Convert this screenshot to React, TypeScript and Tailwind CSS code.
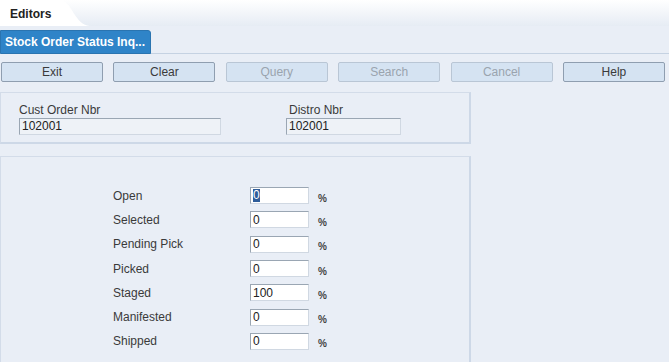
import React from "react";

const font = { fontFamily: '"Liberation Sans", Arial, sans-serif' };

function Btn({ label, disabled }: { label: string; disabled?: boolean }) {
  return (
    <div
      className={`w-[102px] h-[20px] flex items-center justify-center rounded-[2px] border text-[12px] bg-[#d5e3f2] ${
        disabled ? "border-[#b9c6d5] text-[#9aa4ae]" : "border-[#8f9eb0] text-[#3a3a3a]"
      }`}
    >
      {label}
    </div>
  );
}

function Row({ label, value, sel }: { label: string; value: string; sel?: boolean }) {
  return (
    <div className="flex items-center h-[24.3px]">
      <div className="w-[137px] text-[12px] text-[#3a3a3a] pl-[112px] box-content">{label}</div>
      <div className="w-[59px] h-[17px] bg-white border border-[#9aa6b3] border-r-[#d0d8e2] border-b-[#d0d8e2] flex items-center pl-[2px] text-[12px] text-[#222]">
        {sel ? <span className="bg-[#2f5d9a] text-white leading-[13px]">{value}</span> : value}
      </div>
      <div className="ml-[9px] mt-[5px] text-[10px] font-bold text-[#444]">%</div>
    </div>
  );
}

export default function App() {
  return (
    <div className="w-[669px] h-[362px] overflow-hidden bg-[#e9eef6] relative" style={font}>
      {/* top strip */}
      <div className="h-[26px] bg-gradient-to-b from-[#ffffff] to-[#e6ecf4] relative">
        <svg className="absolute left-0 top-0" width="92" height="26" viewBox="0 0 92 26">
          <path d="M0 0 H60 C72 0 74 25 90 26 H0 Z" fill="#ffffff" />
        </svg>
        <div className="absolute left-[10px] top-[5px] text-[12px] font-bold text-[#222]">Editors</div>
      </div>
      {/* tab row */}
      <div className="h-[28px] border-b border-[#c5d2e2] flex items-end pl-0">
        <div className="h-[24px] w-[151px] bg-[#2f84c8] rounded-tr-[3px] border border-[#2a74b0] flex items-center pl-[4px] text-white text-[12px] font-bold mb-[-1px]">
          Stock Order Status Inq...
        </div>
      </div>
      {/* buttons */}
      <div className="flex gap-[10.4px] pl-[1px] mt-[8px]">
        <Btn label="Exit" />
        <Btn label="Clear" />
        <Btn label="Query" disabled />
        <Btn label="Search" disabled />
        <Btn label="Cancel" disabled />
        <Btn label="Help" />
      </div>
      {/* panel 1 */}
      <div className="mt-[10px] w-[471px] h-[52px] border border-[#d3dce9] border-r-[2px] border-b-[2px] border-r-[#cdd8e7] border-b-[#cdd8e7] flex pt-[10px]">
        <div className="pl-[18px] w-[285px]">
          <div className="text-[12px] text-[#3a3a3a] leading-[14px]">Cust Order Nbr</div>
          <div className="mt-[1px] w-[202px] h-[17px] bg-[#eef2f7] border border-[#9aa6b3] border-r-[#d0d8e2] border-b-[#d0d8e2] text-[12px] text-[#222] pl-[2px] leading-[15px]">
            102001
          </div>
        </div>
        <div>
          <div className="text-[12px] text-[#3a3a3a] leading-[14px] pl-[3px]">Distro Nbr</div>
          <div className="mt-[1px] w-[115px] h-[17px] bg-[#eef2f7] border border-[#9aa6b3] border-r-[#d0d8e2] border-b-[#d0d8e2] text-[12px] text-[#222] pl-[2px] leading-[15px]">
            102001
          </div>
        </div>
      </div>
      {/* panel 2 */}
      <div className="mt-[12px] w-[471px] h-[220px] border border-[#d3dce9] border-r-[2px] border-r-[#cdd8e7] pt-[26.5px]">
        <Row label="Open" value="0" sel />
        <Row label="Selected" value="0" />
        <Row label="Pending Pick" value="0" />
        <Row label="Picked" value="0" />
        <Row label="Staged" value="100" />
        <Row label="Manifested" value="0" />
        <Row label="Shipped" value="0" />
      </div>
    </div>
  );
}
